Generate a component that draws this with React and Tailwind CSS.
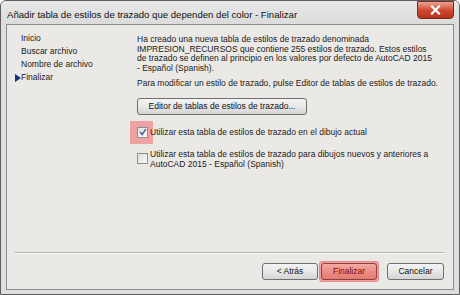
import React from "react";

const navItems = ["Inicio", "Buscar archivo", "Nombre de archivo", "Finalizar"];

const CloseButton = () => (
  <div className="w-[37px] h-[18px] rounded-b-[4px] border border-[#7a2a1c] bg-gradient-to-b from-[#e8a594] via-[#cf4a30] to-[#b9311c] flex items-center justify-center">
    <svg width="11" height="10" viewBox="0 0 11 10">
      <path d="M2 1.5 L9 8.5 M9 1.5 L2 8.5" stroke="#ffffff" strokeWidth="2.2" strokeLinecap="square" />
    </svg>
  </div>
);

const Checkbox = ({ checked }) => (
  <div className="w-[11px] h-[11px] border border-[#8f8f8f] bg-gradient-to-br from-[#dcdcdc] to-[#fbfbfb] flex items-center justify-center shrink-0">
    {checked && (
      <svg width="8" height="8" viewBox="0 0 8 8">
        <path d="M1.2 4 L3.2 6.5 L6.8 1.2" stroke="#4a5f9a" strokeWidth="1.5" fill="none" />
      </svg>
    )}
  </div>
);

const WinButton = ({ children, className = "" }) => (
  <button
    className={`h-[17px] rounded-[3px] border border-[#707070] bg-gradient-to-b from-[#f4f4f4] via-[#e8e8e8] to-[#d4d4d4] text-[#111] text-[8.5px] leading-none whitespace-nowrap ${className}`}
  >
    {children}
  </button>
);

export default function App() {
  return (
    <div
      className="w-[460px] h-[295px] bg-[#dedede] text-[8.5px] text-[#1a1a1a] flex flex-col rounded-t-[6px] border border-[#5e5e5e] overflow-hidden"
      style={{ fontFamily: '"Liberation Sans", Arial, sans-serif' }}
    >
      <div className="h-[23px] flex items-start justify-between pl-[6px] pr-[5px] bg-gradient-to-b from-[#e8e8e8] to-[#dcdcdc]">
        <span className="pt-[7px] text-[9.6px] text-[#111]">
          Añadir tabla de estilos de trazado que dependen del color - Finalizar
        </span>
        <CloseButton />
      </div>

      <div className="flex-1 mx-[5px] mb-[4px] border border-[#8d8d8d] bg-[#ebe9e6] flex flex-col">
        <div className="flex flex-1">
          <div className="w-[130px] pt-[7px] pl-[7px] flex flex-col">
            {navItems.map((item, i) => (
              <div key={item} className="relative h-[13px] leading-[13px] pl-[7px] whitespace-nowrap">
                {i === 3 && (
                  <span className="absolute left-[1px] top-[3px] w-0 h-0 border-y-[4px] border-y-transparent border-l-[6px] border-l-[#1c2f7a]" />
                )}
                {item}
              </div>
            ))}
          </div>

          <div className="flex-1 pt-[10px] pr-[8px] flex flex-col items-start whitespace-nowrap">
            <p className="leading-[9.5px]">
              Ha creado una nueva tabla de estilos de trazado denominada
              <br />
              IMPRESION_RECURSOS que contiene 255 estilos de trazado. Estos estilos
              <br />
              de trazado se definen al principio en los valores por defecto de AutoCAD 2015
              <br />- Español (Spanish).
            </p>
            <p className="mt-[6px] leading-[9.5px]">
              Para modificar un estilo de trazado, pulse Editor de tablas de estilos de trazado.
            </p>
            <WinButton className="mt-[9px] w-[170px] h-[16px]">
              Editor de tablas de estilos de trazado...
            </WinButton>

            <div className="relative mt-[6px] h-[23px] flex items-center">
              <span className="absolute -left-[7px] top-0 w-[23px] h-[23px] bg-[#f09a9a]/90" />
              <div className="relative flex items-center gap-[2px]">
                <Checkbox checked />
                <span>Utilizar esta tabla de estilos de trazado en el dibujo actual</span>
              </div>
            </div>

            <div className="mt-[5px] flex items-center gap-[2px]">
              <Checkbox />
              <span className="leading-[10px]">
                Utilizar esta tabla de estilos de trazado para dibujos nuevos y anteriores a
                <br />
                AutoCAD 2015 - Español (Spanish)
              </span>
            </div>
          </div>
        </div>

        <div className="ml-[8px] mr-[9px] border-t border-t-[#b4b4b4] border-b border-b-[#fbfbfb]" />

        <div className="h-[35px] flex items-center justify-end pr-[9px]">
          <WinButton className="w-[56px]">&lt; Atrás</WinButton>
          <div className="ml-[1px] p-[1px] bg-[#efa0a0] rounded-[3px] border border-[#e58a8a]">
            <WinButton className="w-[56px] !border-[#8e4040] !from-[#f4aaa3] !via-[#ec8d85] !to-[#e47b72] !text-[#7a0f0f]">
              Finalizar
            </WinButton>
          </div>
          <WinButton className="ml-[8px] w-[57px]">Cancelar</WinButton>
        </div>
      </div>
    </div>
  );
}
